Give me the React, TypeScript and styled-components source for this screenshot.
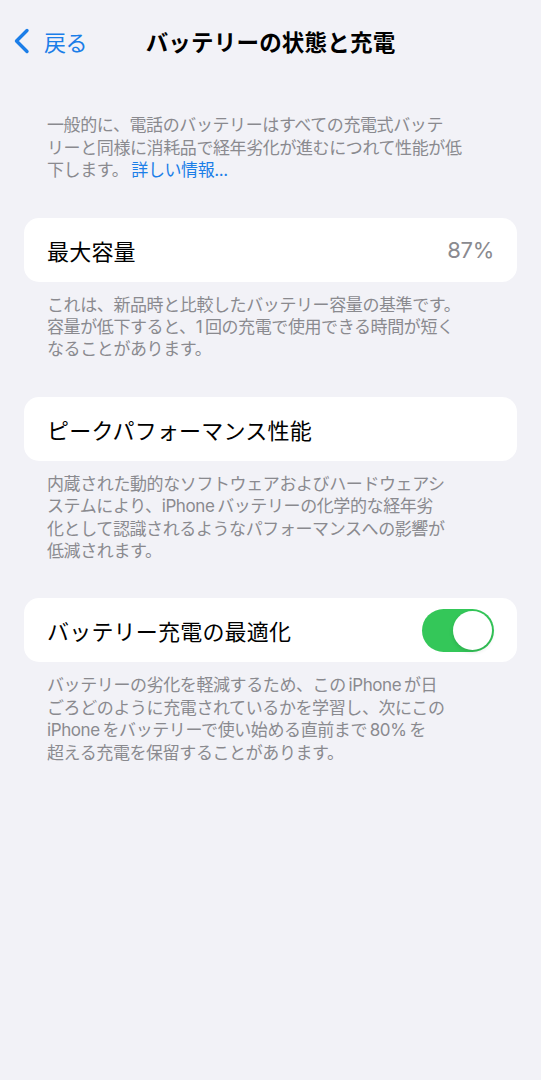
import React from 'react';
import styled, { createGlobalStyle } from 'styled-components';

const FONT = `Inter, "Noto Sans CJK JP", "Noto Sans", sans-serif`;
// iOS puts a little air between Japanese and Latin runs
const T = '\u2009';

type Section = {
  label: string
  value?: string
  toggle?: boolean
  footer: string[]
};

const sections: Section[] = [
  {
    label: '最大容量',
    value: '87%',
    footer: [
      'これは、新品時と比較したバッテリー容量の基準です。',
      `容量が低下すると、1${T}回の充電で使用できる時間が短く`,
      'なることがあります。',
    ],
  },
  {
    label: 'ピークパフォーマンス性能',
    footer: [
      '内蔵された動的なソフトウェアおよびハードウェアシ',
      `ステムにより、iPhone${T}バッテリーの化学的な経年劣`,
      '化として認識されるようなパフォーマンスへの影響が',
      '低減されます。',
    ],
  },
  {
    label: 'バッテリー充電の最適化',
    toggle: true,
    footer: [
      `バッテリーの劣化を軽減するため、この${T}iPhone${T}が日`,
      'ごろどのように充電されているかを学習し、次にこの',
      `iPhone${T}をバッテリーで使い始める直前まで${T}80%${T}を`,
      '超える充電を保留することがあります。',
    ],
  },
];

export default function App() {
  const [optimized, setOptimized] = React.useState(true);

  return (
    <>
      <GlobalStyle />
      <Screen>
        <NavBar>
          <BackButton>
            <svg width="17" height="26" viewBox="0 0 17 26" fill="none">
              <polyline
                points="14,2.5 3.5,13 14,23.5"
                stroke="#1b7ee8"
                strokeWidth="3.4"
                strokeLinecap="round"
                strokeLinejoin="round"
              />
            </svg>
            <BackText>戻る</BackText>
          </BackButton>
          <Title>バッテリーの状態と充電</Title>
          <span />
        </NavBar>

        <Intro>
          <Line>一般的に、電話のバッテリーはすべての充電式バッテ</Line>
          <Line>リーと同様に消耗品で経年劣化が進むにつれて性能が低</Line>
          <Line>
            下します。<Link>詳しい情報...</Link>
          </Line>
        </Intro>

        {sections.map((s) => (
          <Group key={s.label}>
            <Card>
              <Label>{s.label}</Label>
              {s.value && <Value>{s.value}</Value>}
              {s.toggle && (
                <Toggle $on={optimized} onClick={() => setOptimized(!optimized)}>
                  <Knob $on={optimized} />
                </Toggle>
              )}
            </Card>
            <Footer>
              {s.footer.map((line) => (
                <Line key={line}>{line}</Line>
              ))}
            </Footer>
          </Group>
        ))}
      </Screen>
    </>
  );
}

const GlobalStyle = createGlobalStyle`
  html, body {
    margin: 0;
    padding: 0;
    background: #f2f2f7;
  }
  body {
    font-family: ${FONT};
    -webkit-font-smoothing: antialiased;
  }
`;

const Screen = styled.div`
  width: 541px;
  min-height: 1080px;
  background: #f2f2f7;
`;

const NavBar = styled.header`
  height: 82px;
  display: grid;
  grid-template-columns: 1fr auto 1fr;
  align-items: center;
  padding: 0 13px;
  box-sizing: border-box;
`;

const BackButton = styled.div`
  display: flex;
  align-items: center;
  gap: 14px;
  cursor: pointer;
`;

const BackText = styled.span`
  color: #1b7ee8;
  font-size: 22px;
  letter-spacing: -0.5px;
`;

const Title = styled.h1`
  margin: 0;
  font-size: 22.5px;
  font-weight: 700;
  color: #000;
  letter-spacing: 0.2px;
`;

const Intro = styled.div`
  margin-top: 32px;
  padding: 0 47px;
  font-size: 17px;
  line-height: 22.5px;
  letter-spacing: -0.4px;
  color: #8a8a8f;
`;

const Line = styled.div`
  white-space: nowrap;
`;

const Link = styled.span`
  color: #1b7ee8;
  margin-left: 3px;
`;

const Group = styled.section`
  margin-top: 36px;
`;

const Card = styled.div`
  margin: 0 24px;
  height: 64px;
  background: #fff;
  border-radius: 15px;
  display: flex;
  align-items: center;
  justify-content: space-between;
  padding: 0 23px;
  box-sizing: border-box;
`;

const Label = styled.span`
  font-size: 22px;
  color: #000;
  letter-spacing: 0.2px;
`;

const Value = styled.span`
  font-size: 22px;
  color: #8a8a8f;
  letter-spacing: -0.3px;
`;

const Toggle = styled.div<{ $on: boolean }>`
  width: 72px;
  height: 43px;
  border-radius: 22px;
  background: ${(p) => (p.$on ? '#34c759' : '#e9e9ea')};
  display: flex;
  align-items: center;
  justify-content: ${(p) => (p.$on ? 'flex-end' : 'flex-start')};
  padding: 2px;
  box-sizing: border-box;
  cursor: pointer;
`;

const Knob = styled.div<{ $on: boolean }>`
  width: 39px;
  height: 39px;
  border-radius: 50%;
  background: #fff;
  box-shadow: 0 2px 4px rgba(0, 0, 0, 0.12);
`;

const Footer = styled.div`
  padding: 12px 47px 0;
  font-size: 17px;
  line-height: 22.4px;
  letter-spacing: -0.4px;
  color: #8a8a8f;
`;
